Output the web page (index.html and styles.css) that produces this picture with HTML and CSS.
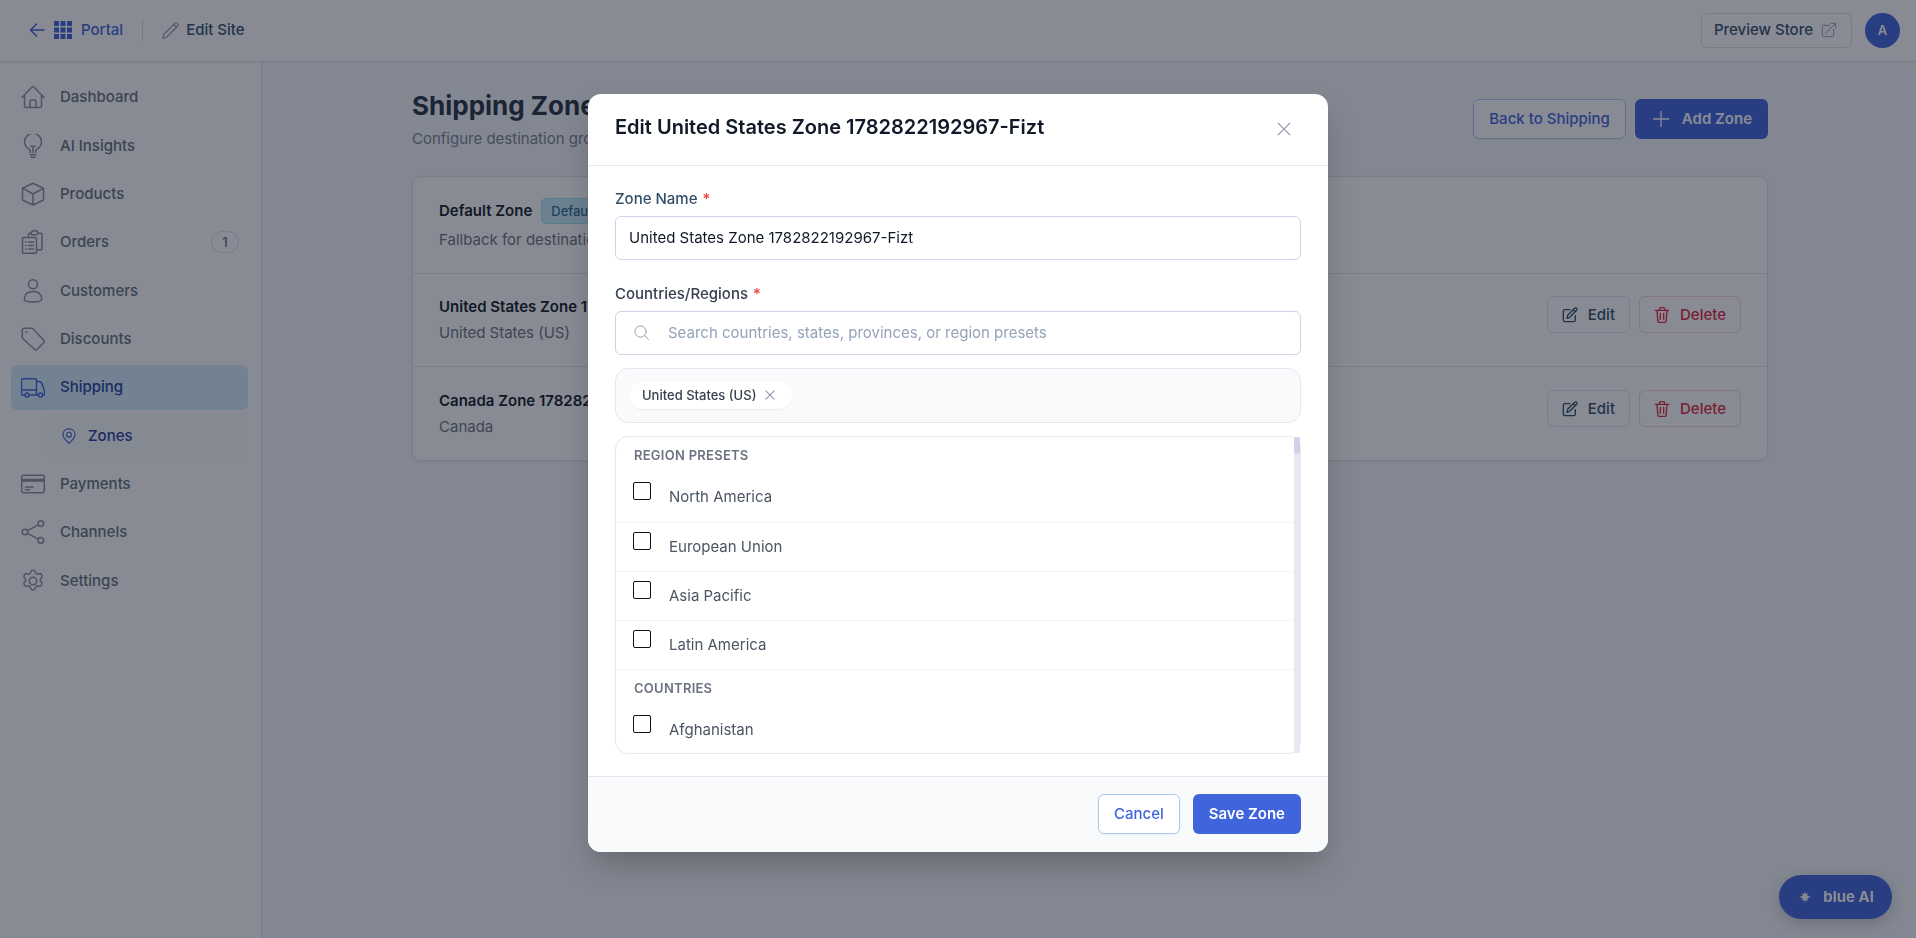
FILE: index.html
```html
<!DOCTYPE html>
<html lang="en">
<head>
<meta charset="utf-8">
<title>Shipping Zones</title>
<link rel="stylesheet" href="styles.css">
</head>
<body>
<svg class="sprite" aria-hidden="true">
  <symbol id="i-edit" viewBox="0 0 24 24"><path d="M12 4H4.500a2.500 2.500 0 0 0-2.500 2.500v13A2.500 2.500 0 0 0 4.500 22h13a2.500 2.500 0 0 0 2.500-2.500V13"/><path d="M7.500 17l1-4.500L19 2a2 2 0 0 1 3 3L11.500 15.500zM17 4l3 3"/></symbol>
  <symbol id="i-trash" viewBox="0 0 24 24"><path d="M2 5h20M4.500 5l1.200 16a2 2 0 0 0 2 2h8.600a2 2 0 0 0 2-2L19.500 5M8 5V3a2 2 0 0 1 2-2h4a2 2 0 0 1 2 2v2M9.500 9.500v9M14.500 9.500v9"/></symbol>
  <symbol id="i-x" viewBox="0 0 24 24"><path d="M2 2l20 20M22 2L2 22"/></symbol>
</svg>

<div class="app">
  <header class="topbar">
    <nav class="topbar-left" aria-label="Site">
      <a class="portal" href="#">
        <svg class="ico-arrow" viewBox="0 0 16 16"><path d="M15 8H1.500M7.500 2l-6 6 6 6"/></svg>
        <svg class="ico-grid" viewBox="0 0 18 18"><path d="M0 0h5v5H0zM6.500 0h5v5h-5zM13 0h5v5h-5zM0 6.500h5v5H0zM6.500 6.500h5v5h-5zM13 6.500h5v5h-5zM0 13h5v5H0zM6.500 13h5v5h-5zM13 13h5v5h-5z"/></svg>
        <span>Portal</span>
      </a>
      <a class="edit-site" href="#">
        <svg class="ico-pencil" viewBox="0 0 24 24"><path d="M1 23l1.500-5.500L18 2a2.200 2.200 0 0 1 3.200 0l.8.800a2.200 2.200 0 0 1 0 3.200L6.500 21.500zM16.500 3.500l4 4"/></svg>
        <span>Edit Site</span>
      </a>
    </nav>
    <div class="topbar-right">
      <a class="preview" href="#">Preview Store
        <svg class="ico-ext" viewBox="0 0 24 24"><path d="M13 5H3.500A1.500 1.500 0 0 0 2 6.500v14A1.500 1.500 0 0 0 3.500 22h14a1.500 1.500 0 0 0 1.500-1.500V11M7 17L22 2M15 2h7v7"/></svg>
      </a>
      <button class="avatar" type="button">A</button>
    </div>
  </header>

  <div class="shell">
    <aside class="sidebar">
      <nav class="menu" aria-label="Main">
        <a href="#"><svg viewBox="0 0 24 24"><path d="M1 12.500L11.300 1.800a1 1 0 0 1 1.400 0L23 12.500M3.500 10.500v10.600c0 .8.600 1.400 1.400 1.400h14.200c.8 0 1.400-.6 1.400-1.400V10.500M9 22.500V16a1 1 0 0 1 1-1h4a1 1 0 0 1 1 1v6.500"/></svg>Dashboard</a>
        <a href="#"><svg viewBox="0 0 24 24"><path d="M9.300 18.500v-1.600c0-.7-.4-1.200-1-1.600a8.400 8.400 0 1 1 7.400 0c-.6.400-1 .9-1 1.600v1.600M9.800 12.300h4.400M12 12.300v6.200M9.300 20.800h5.400M10 23.300h4"/></svg>AI Insights</a>
        <a href="#"><svg viewBox="0 0 24 24"><path d="M12 1.200l10.500 5V18L12 23 1.500 18V6.200zM1.500 6.200L12 12l10.500-5.800M12 12v11"/></svg>Products</a>
        <a href="#"><svg viewBox="0 0 24 24"><path d="M2.500 7.500h12a1 1 0 0 1 1 1v13.700a1 1 0 0 1-1 1h-12a1 1 0 0 1-1-1V8.500a1 1 0 0 1 1-1zM7.500 7.500V4.500a1.200 1.200 0 0 1 1.200-1.200H10M17 3.300h2.800A1.200 1.200 0 0 1 21 4.500v14a1.200 1.200 0 0 1-1.200 1.200h-4.300M10 3.500c0-1.500 1-2.700 3.500-2.700S17 2 17 3.500c0 .8-.5 1.300-1.300 1.300h-4.400c-.8 0-1.300-.5-1.300-1.300zM4.500 12h.6M7.500 12h5M4.500 15.500h.6M7.500 15.500h5M4.500 19h.6M7.500 19h5"/></svg>Orders<span class="count">1</span></a>
        <a href="#"><svg viewBox="0 0 24 24"><circle cx="12" cy="5.300" r="4.500"/><path d="M3.200 20c.4-5 4-7.600 8.800-7.600s8.400 2.600 8.800 7.600c0 1.900-3.800 3-8.800 3s-8.800-1.100-8.800-3z"/></svg>Customers</a>
        <a href="#"><svg viewBox="0 0 24 24"><path d="M1.200 3.200a2 2 0 0 1 2-2h7.300a2 2 0 0 1 1.400.6L22.500 13a2 2 0 0 1 0 2.800l-6.200 6.500a2 2 0 0 1-2.900 0L1.800 11.500a2 2 0 0 1-.6-1.400z"/><circle cx="5.500" cy="5.300" r=".4"/></svg>Discounts</a>
        <a class="active" href="#"><svg viewBox="0 0 24 24"><path d="M3.500 20H1.800A1.300 1.300 0 0 1 .5 18.700V5a1.300 1.300 0 0 1 1.300-1.300h12.400A1.300 1.300 0 0 1 15.500 5v15H8M.5 15h15M15.500 6.500h2.300c1.700 0 2.600.8 3.200 2.400l2.500 6.600v3.200a1.300 1.300 0 0 1-1.300 1.300M15.500 20h2"/><circle cx="6" cy="20" r="2"/><circle cx="19.500" cy="20" r="2"/></svg>Shipping</a>
        <a class="sub" href="#"><svg viewBox="0 0 24 24"><path d="M12 23c-3-3.200-9-7.800-9-13.300C3 4.500 7 1.200 12 1.200s9 3.300 9 8.500C21 15.200 15 19.800 12 23z"/><circle cx="12" cy="10" r="3.600"/></svg>Zones</a>
        <a href="#"><svg viewBox="0 0 24 24"><rect x=".7" y="3.200" width="22.600" height="17.600" rx="2"/><path d="M.7 7.500h22.600M.7 9h22.600M4.500 15h7.500M4.500 17.800h4"/></svg>Payments</a>
        <a href="#"><svg viewBox="0 0 24 24"><circle cx="4" cy="12" r="2.800"/><circle cx="19.800" cy="3.600" r="2.800"/><circle cx="19.800" cy="20.400" r="2.800"/><path d="M6.500 10.700l10.800-5.800M6.500 13.300l10.800 5.800"/></svg>Channels</a>
        <a href="#"><svg viewBox="0 0 24 24"><circle cx="12" cy="12" r="3.700"/><path d="M9.700 2.700c.5-2 4.100-2 4.600 0l.4 1.300c.3.900 1.200 1.300 2.100 1.100l1.400-.4c2-.5 3.800 2.500 2.400 4l-1 1c-.6.700-.6 1.700 0 2.400l1 1c1.400 1.500-.4 4.600-2.400 4.100l-1.400-.3c-.9-.2-1.800.3-2.100 1.200l-.4 1.300c-.5 2-4.100 2-4.600 0l-.4-1.300c-.3-.9-1.200-1.400-2.100-1.200l-1.400.3c-2 .5-3.800-2.600-2.400-4.100l1-1c.6-.7.6-1.700 0-2.400l-1-1c-1.400-1.500.4-4.500 2.400-4l1.400.4c.9.200 1.800-.2 2.100-1.100z"/></svg>Settings</a>
      </nav>
    </aside>

    <main class="main">
      <div class="content">
        <div class="page-head">
          <div>
            <h1>Shipping Zones</h1>
            <p>Configure destination groups for your shipping rates.</p>
          </div>
          <div class="actions">
            <button class="btn btn-outline" type="button">Back to Shipping</button>
            <button class="btn btn-primary btn-add" type="button"><svg viewBox="0 0 16 16"><path d="M8 0v16M0 8h16"/></svg>Add Zone</button>
          </div>
        </div>
        <div class="card">
          <section class="zone zone-default">
            <div>
              <h2>Default Zone <span class="tag">Default</span></h2>
              <p>Fallback for destinations that match no other zone.</p>
            </div>
          </section>
          <section class="zone">
            <div>
              <h2>United States Zone 1782822192967-Fizt</h2>
              <p>United States (US)</p>
            </div>
            <div class="zone-actions">
              <button class="btn-sm" type="button"><svg><use href="#i-edit"/></svg>Edit</button>
              <button class="btn-sm danger" type="button"><svg><use href="#i-trash"/></svg>Delete</button>
            </div>
          </section>
          <section class="zone">
            <div>
              <h2>Canada Zone 1782822192967-Fizt</h2>
              <p>Canada</p>
            </div>
            <div class="zone-actions">
              <button class="btn-sm" type="button"><svg><use href="#i-edit"/></svg>Edit</button>
              <button class="btn-sm danger" type="button"><svg><use href="#i-trash"/></svg>Delete</button>
            </div>
          </section>
        </div>
      </div>
    </main>
  </div>
</div>

<button class="assistant" type="button"><svg viewBox="0 0 24 24"><path d="M12 0l1.500 6.500L19 4l-3 5.500L24 12l-8 2.500L19 20l-5.500-2.500L12 24l-1.500-6.500L5 20l3-5.500L0 12l8-2.500L5 4l5.500 2.500z"/></svg>blue AI</button>

<div class="overlay">
  <form class="modal" role="dialog" aria-labelledby="dlg-title">
    <div class="modal-head">
      <h2 id="dlg-title">Edit United States Zone 1782822192967-Fizt</h2>
      <button class="close" type="button" aria-label="Close"><svg><use href="#i-x"/></svg></button>
    </div>
    <div class="modal-body">
      <label class="field-label" for="zone-name">Zone Name <span class="req">*</span></label>
      <input class="input" id="zone-name" type="text" value="United States Zone 1782822192967-Fizt">
      <label class="field-label dark" for="zone-search">Countries/Regions <span class="req">*</span></label>
      <div class="search">
        <svg viewBox="0 0 16 16"><circle cx="7" cy="7" r="6"/><path d="M11.300 11.300L15.500 15.500"/></svg>
        <input class="search-input" id="zone-search" type="text" placeholder="Search countries, states, provinces, or region presets">
      </div>
      <div class="chips">
        <span class="chip">United States (US)<button type="button" aria-label="Remove"><svg><use href="#i-x"/></svg></button></span>
      </div>
      <div class="picker">
        <div class="options">
          <h3>Region Presets</h3>
          <label class="option"><input type="checkbox"><span>North America</span></label>
          <label class="option"><input type="checkbox"><span>European Union</span></label>
          <label class="option"><input type="checkbox"><span>Asia Pacific</span></label>
          <label class="option"><input type="checkbox"><span>Latin America</span></label>
          <h3>Countries</h3>
          <label class="option"><input type="checkbox"><span>Afghanistan</span></label>
        </div>
        <div class="track"><div class="thumb"></div></div>
      </div>
    </div>
    <div class="modal-foot">
      <button class="btn btn-outline" type="button">Cancel</button>
      <button class="btn btn-primary" type="submit">Save Zone</button>
    </div>
  </form>
</div>
</body>
</html>
```
FILE: styles.css
```css
* { box-sizing: border-box; }
body {
  margin: 0;
  font-family: Inter, "Liberation Sans", sans-serif;
  font-size: 15px;
  line-height: 24px;
  color: #4b5563;
  background: #f5f7fa;
}
h1, h2, h3, p { margin: 0; }
a { color: inherit; text-decoration: none; }
button, input { font: inherit; }
button { cursor: pointer; }
svg { fill: none; stroke: currentColor; stroke-width: 1.500; stroke-linecap: round; stroke-linejoin: round; flex: none; }
.sprite { display: none; }

.app { min-height: 100vh; display: flex; flex-direction: column; }
.topbar {
  display: flex; justify-content: space-between; align-items: center;
  height: 62px; padding: 0 16px 1px 29px;
  background: #fff; border-bottom: 1px solid #e1e3e8;
  box-shadow: 0 1px 2px rgba(0, 0, 0, .06);
  font-weight: 500;
  z-index: 1;
}
.topbar-left, .portal, .edit-site, .topbar-right { display: flex; align-items: center; }
.portal { color: #4064dc; gap: 9px; padding-right: 19px; border-right: 1px solid #dcdfe6; line-height: 22px; }
.edit-site { color: #334e68; gap: 7px; padding-left: 19px; }
.ico-arrow { width: 16px; height: 16px; }
.ico-grid { width: 18px; height: 18px; fill: currentColor; stroke: none; }
.ico-pencil { width: 17px; height: 17px; color: #8a90a6; }
.topbar-right { gap: 13px; }
.preview {
  display: flex; align-items: center; gap: 8px;
  height: 35px; padding: 0 14px 0 12px;
  border: 1px solid #dcdfe6; border-radius: 6px; color: #334e68;
}
.ico-ext { width: 16px; height: 16px; color: #9a9fb5; }
.avatar {
  width: 35px; height: 35px; padding: 0; border: 0; border-radius: 50%;
  background: #4064dc; color: #fff; font-size: 13px; font-weight: 600;
}

.shell { flex: 1; display: flex; }
.sidebar { flex: 0 0 262px; background: #fff; border-right: 1px solid #dde0e8; padding: 13px 13px 13px 11px; }
.menu { display: grid; grid-auto-rows: 1fr; gap: 4px; min-height: 528px; }
.menu a {
  display: flex; align-items: center; gap: 15px;
  padding: 0 9px 0 10px; border-radius: 6px;
  color: #627080; font-weight: 500;
}
.menu svg { width: 24px; height: 24px; color: #8a90a6; stroke-width: 1.500; }
.menu .active { background: #d3edff; color: #24409c; }
.menu .active svg, .menu .sub svg { color: #4064dc; }
.menu .sub { margin-left: 35px; padding-left: 15px; gap: 11px; background: #f8fafc; color: #24409c; }
.menu .sub svg { width: 16px; height: 16px; stroke-width: 1.800; }
.count {
  margin-left: auto; width: 28px; height: 22px;
  border: 1px solid #dcdfe6; border-radius: 11px;
  font-size: 13px; line-height: 20px; text-align: center;
}

.main { flex: 1; padding: 24px 43px 24px 45px; }
.content { max-width: 1356px; margin: 0 auto; }
.page-head { display: flex; justify-content: space-between; align-items: center; margin-bottom: 25px; }
.page-head h1 { font-size: 26px; line-height: 40px; font-weight: 700; color: #243042; }
.page-head p { line-height: 25px; color: #7b8494; }
.actions { display: flex; gap: 9px; }
.btn { display: inline-flex; align-items: center; height: 40px; padding: 0 15px; border-radius: 6px; border: 1px solid transparent; font-weight: 500; }
.btn-outline { background: #fff; border-color: #a8c8f8; color: #4064dc; box-shadow: 0 1px 2px rgba(0, 0, 0, .05); }
.btn-primary { background: #4064dc; color: #fff; font-weight: 600; }
.btn-add { gap: 13px; padding-left: 17px; }
.btn-add svg { width: 16px; height: 16px; stroke-width: 1.300; }

.card { background: #fff; border: 1px solid #dfe2ea; border-radius: 9px; box-shadow: 0 1px 3px rgba(0, 0, 0, .08); }
.zone { display: flex; justify-content: space-between; align-items: flex-start; padding: 19px 26px 20px; border-bottom: 1px solid #e1e4ea; }
.zone:last-child { border-bottom: 0; padding-top: 20px; }
.zone-default { padding-top: 20px; }
.zone h2 { font-size: 15px; line-height: 27px; font-weight: 600; color: #111827; display: flex; align-items: center; gap: 9px; }
.zone p { line-height: 26px; color: #6b7280; }
.zone-default p { padding-top: 3px; }
.tag { padding: 0 9px; border: 1px solid #9be5f2; border-radius: 5px; background: #c8ecfb; color: #2c6a94; font-size: 13px; line-height: 24px; font-weight: 500; }
.zone-actions { display: flex; gap: 9px; padding-top: 3px; }
.btn-sm {
  display: inline-flex; align-items: center; gap: 10px;
  height: 37px; padding: 0 14px; border: 1px solid #dfe5ee; border-radius: 6px;
  background: #fff; color: #334e68; font-weight: 500;
}
.btn-sm svg { width: 16px; height: 16px; stroke-width: 2; }
.btn-sm.danger { border-color: #f6d3d6; color: #e02440; }

.assistant {
  position: fixed; right: 24px; bottom: 19px;
  display: flex; align-items: center; gap: 12px;
  height: 44px; padding: 0 18px 0 20px; border: 0; border-radius: 22px;
  background: #4064dc; color: #fff; font-weight: 700;
  box-shadow: 0 4px 16px rgba(0, 0, 0, .2);
}
.assistant svg { width: 12px; height: 14px; fill: currentColor; stroke: none; }

.overlay {
  position: fixed; inset: 0; z-index: 10;
  display: flex; justify-content: center; align-items: flex-start;
  padding-top: 10vh; background: rgba(17, 24, 39, .5);
}
.modal {
  width: 740px; max-width: 95%; border-radius: 13px; overflow: hidden;
  background: #fff; box-shadow: 0 16px 32px -6px rgba(0, 0, 0, .25);
}
.modal-head { display: flex; justify-content: space-between; align-items: center; height: 72px; padding: 0 27px; border-bottom: 1px solid #e5e7eb; }
.modal-head h2 { font-size: 20px; line-height: 30px; font-weight: 600; color: #111827; padding-bottom: 4px; }
.close { display: grid; place-items: center; width: 34px; height: 34px; padding: 0; border: 0; background: none; color: #8f95aa; }
.close svg { width: 14px; height: 14px; stroke-width: 2; }
.modal-body { padding: 21px 27px 22px; }
.field-label { display: block; font-weight: 500; color: #334e68; line-height: 24px; margin-bottom: 5px; }
.field-label.dark { color: #374151; margin-top: 22px; }
.req { color: #ef4444; margin-left: 1px; }
.input, .search { width: 100%; height: 44px; border: 1px solid #d0d1e6; border-radius: 6px; background: #fff; }
.input { padding: 0 13px; color: #111827; display: block; }
.search { display: flex; align-items: center; gap: 19px; padding: 0 13px 0 18px; }
.search svg { width: 15px; height: 15px; color: #9298ae; stroke-width: 1; }
.search-input { flex: 1; min-width: 0; border: 0; outline: 0; padding: 0; background: none; color: #111827; }
.search-input::placeholder { color: #94a3b8; opacity: 1; }
.chips { display: flex; margin-top: 13px; padding: 13px; border: 1px solid #e5e7eb; border-radius: 13px; background: #f9fafc; }
.chip { display: flex; align-items: center; gap: 9px; height: 27px; padding: 0 17px 0 13px; border-radius: 14px; background: #fff; box-shadow: 0 1px 2px rgba(0, 0, 0, .06); font-size: 13px; font-weight: 500; color: #374151; }
.chip button { display: flex; padding: 0; border: 0; background: none; color: #8f95aa; }
.chip svg { width: 10px; height: 10px; stroke-width: 2.500; }
.picker { display: flex; margin-top: 13px; border: 1px solid #e5e7eb; border-radius: 13px; }
.options { flex: 1; }
.options h3 { padding: 9px 18px 0; font-size: 13px; line-height: 18px; font-weight: 600; text-transform: uppercase; letter-spacing: .02em; color: #6b7280; }
.option { display: flex; align-items: flex-start; gap: 18px; height: 49px; padding: 9px 17px 0; border-bottom: 1px solid #f3f4f6; }
.options h3 + .option { height: 59px; padding-top: 18px; }
.options .option:last-child { height: 56px; border-bottom: 0; }
.option input { appearance: none; width: 18px; height: 18px; margin: 0; border: 1px solid #111; border-radius: 2px; background: #fff; }
.option span { padding-top: 3px; }
.track { width: 6px; background: #e6e9f1; }
.thumb { height: 17px; border-radius: 3px; background: #d0d1e8; }
.modal-foot { display: flex; justify-content: flex-end; gap: 13px; padding: 17px 27px 18px; border-top: 1px solid #e5e7eb; background: #f9fafc; }
```
